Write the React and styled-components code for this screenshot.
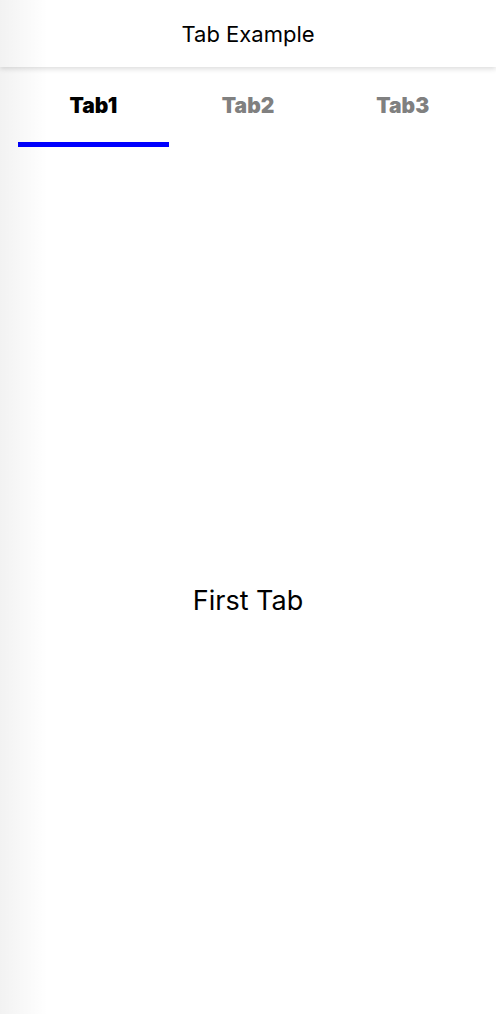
import React, { useState } from 'react';
import styled, { createGlobalStyle } from 'styled-components';

const GlobalStyle = createGlobalStyle`
    html, body {
        margin: 0;
        padding: 0;
        background: #ffffff;
        font-family: Inter, "Noto Sans", sans-serif;
    }
`;

const Screen = styled.div`
    position: relative;
    display: flex;
    flex-direction: column;
    height: 1014px;
    background: #ffffff;
    overflow: hidden;
`;

const EdgeShade = styled.div`
    position: absolute;
    top: 0;
    left: 0;
    bottom: 0;
    width: 48px;
    background: linear-gradient(to right, rgba(0, 0, 0, 0.05), rgba(0, 0, 0, 0));
    pointer-events: none;
    z-index: 5;
`;

const Header = styled.header`
    height: 67px;
    display: flex;
    align-items: center;
    justify-content: center;
    background: #ffffff;
    box-shadow: 0 2px 5px rgba(0, 0, 0, 0.14);
    z-index: 2;
`;

const HeaderTitle = styled.h1`
    margin: 0;
    font-size: 22px;
    font-weight: 400;
    color: #000;
`;

const TabBar = styled.nav`
    display: flex;
    padding: 0 16px;
    height: 83px;
`;

const TabButton = styled.button`
    flex: 1;
    display: flex;
    flex-direction: column;
    align-items: center;
    justify-content: space-between;
    padding: 26px 2px 0;
    border: none;
    background: none;
    cursor: pointer;
    font-family: Inter, "Noto Sans", sans-serif;
    font-size: 21px;
    font-weight: 900;
    color: ${p => (p.$active ? '#000000' : '#808080')};
`;

const Indicator = styled.span`
    align-self: stretch;
    height: 5px;
    background: ${p => (p.$active ? '#0000ff' : 'transparent')};
    margin-bottom: 3px;
`;

const Content = styled.main`
    flex: 1;
    display: flex;
    align-items: center;
    justify-content: center;
    padding-top: 36px;
`;

const ContentText = styled.p`
    margin: 0;
    font-size: 27px;
    color: #000;
`;

const tabs = [
    { id: 'tab1', label: 'Tab1', text: 'First Tab' },
    { id: 'tab2', label: 'Tab2', text: 'Second Tab' },
    { id: 'tab3', label: 'Tab3', text: 'Third Tab' },
];

const App = () => {
    const [active, setActive] = useState(0);

    return (
        <>
            <GlobalStyle />
            <Screen>
                <EdgeShade />
                <Header>
                    <HeaderTitle>Tab Example</HeaderTitle>
                </Header>
                <TabBar>
                    {tabs.map((t, i) => (
                        <TabButton key={t.id} $active={i === active} onClick={() => setActive(i)}>
                            {t.label}
                            <Indicator $active={i === active} />
                        </TabButton>
                    ))}
                </TabBar>
                <Content>
                    <ContentText>{tabs[active].text}</ContentText>
                </Content>
            </Screen>
        </>
    );
};

export default App;
